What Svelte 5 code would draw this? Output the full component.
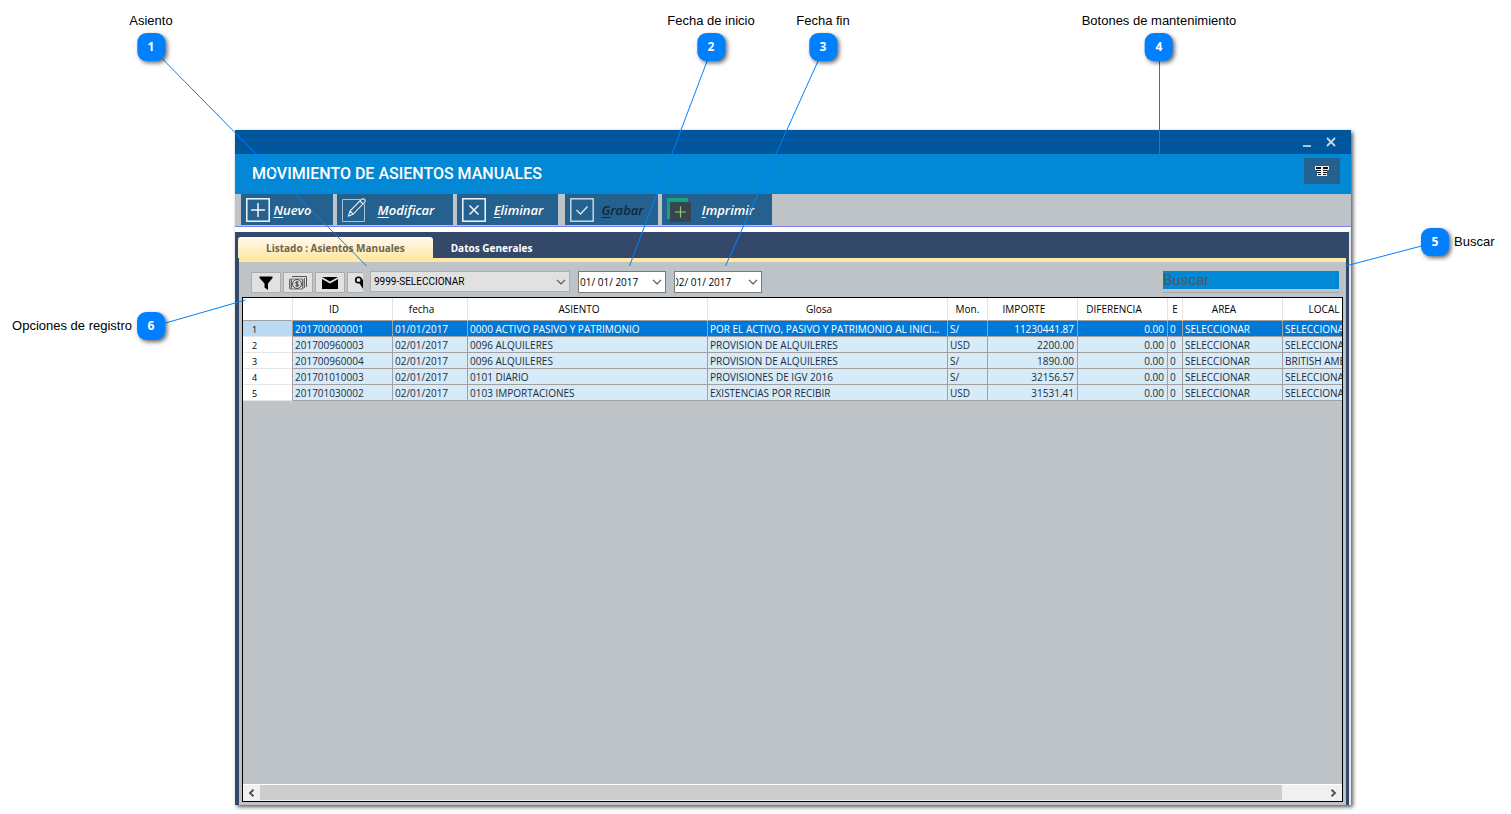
<script lang="ts">
	interface Callout {
		n: number;
		label: string;
		x: number;
		y: number;
		side: 'top' | 'left' | 'right';
		line: [number, number, number, number];
	}

	// x / y is the centre of the numbered badge
	const callouts: Callout[] = [
		{ n: 1, label: 'Asiento', x: 151, y: 47, side: 'top', line: [162, 59, 366, 266] },
		{ n: 2, label: 'Fecha de inicio', x: 711, y: 47, side: 'top', line: [707, 60, 629, 266] },
		{ n: 3, label: 'Fecha fin', x: 823, y: 47, side: 'top', line: [818, 60, 725, 266] },
		{ n: 4, label: 'Botones de mantenimiento', x: 1159, y: 47, side: 'top', line: [1159, 60, 1159, 189] },
		{ n: 5, label: 'Buscar', x: 1435, y: 242, side: 'right', line: [1421, 246, 1345, 266] },
		{ n: 6, label: 'Opciones de registro', x: 151, y: 326, side: 'left', line: [165, 323, 245, 300] }
	];

	const actions = [
		{ id: 'nuevo', label: 'Nuevo' },
		{ id: 'modificar', label: 'Modificar' },
		{ id: 'eliminar', label: 'Eliminar' },
		{ id: 'grabar', label: 'Grabar', disabled: true },
		{ id: 'imprimir', label: 'Imprimir' }
	];

	const columns = [
		{ title: 'ID', width: 100 },
		{ title: 'fecha', width: 75 },
		{ title: 'ASIENTO', width: 240 },
		{ title: 'Glosa', width: 240 },
		{ title: 'Mon.', width: 40, narrow: true },
		{ title: 'IMPORTE', width: 90, num: true },
		{ title: 'DIFERENCIA', width: 90, num: true },
		{ title: 'E', width: 15, narrow: true },
		{ title: 'AREA', width: 100 },
		{ title: 'LOCAL', width: 100 }
	];

	const rows = [
		['201700000001', '01/01/2017', '0000 ACTIVO PASIVO Y PATRIMONIO', 'POR EL ACTIVO, PASIVO Y PATRIMONIO AL INICIO DEL EJERCICIO', 'S/', '11230441.87', '0.00', '0', 'SELECCIONAR', 'SELECCIONAR'],
		['201700960003', '02/01/2017', '0096 ALQUILERES', 'PROVISION DE ALQUILERES', 'USD', '2200.00', '0.00', '0', 'SELECCIONAR', 'SELECCIONAR'],
		['201700960004', '02/01/2017', '0096 ALQUILERES', 'PROVISION DE ALQUILERES', 'S/', '1890.00', '0.00', '0', 'SELECCIONAR', 'BRITISH AMERICAN'],
		['201701010003', '02/01/2017', '0101 DIARIO', 'PROVISIONES DE IGV 2016', 'S/', '32156.57', '0.00', '0', 'SELECCIONAR', 'SELECCIONAR'],
		['201701030002', '02/01/2017', '0103 IMPORTACIONES', 'EXISTENCIAS POR RECIBIR', 'USD', '31531.41', '0.00', '0', 'SELECCIONAR', 'SELECCIONAR']
	];

	let tab = $state('listado');
	let selected = $state(0);
	let desde = $state('01/ 01/ 2017');
	let hasta = $state('02/ 01/ 2017');
	let search = $state('');
</script>

{#snippet chevron()}
	<svg class="chevron" width="10" height="6" viewBox="0 0 10 6" aria-hidden="true">
		<path d="M1 .8 5 4.8 9 .8" fill="none" stroke="#555" stroke-width="1.2" />
	</svg>
{/snippet}

<main>
	<div class="window">
		<div class="titlebar">
			<button aria-label="Minimizar">
				<svg width="12" height="12" viewBox="0 0 12 12"><path d="M2 10h8" stroke="#a9c6e0" stroke-width="2" /></svg>
			</button>
			<button aria-label="Cerrar">
				<svg width="12" height="12" viewBox="0 0 12 12"><path d="m2 2 8 8M10 2l-8 8" stroke="#c3d7ea" stroke-width="1.8" /></svg>
			</button>
		</div>

		<header>
			<h1>MOVIMIENTO DE ASIENTOS MANUALES</h1>
			<button class="menu" aria-label="Menú">
				<svg width="14" height="10" viewBox="0 0 14 10" shape-rendering="crispEdges">
					<path d="M0 0h14v4H0zM2 4h10v6H2z" fill="#f0f0f0" />
					<path d="M1 1h12v2H1zM2 4h10v1H2zM2 6h10v1H2zM3 8h8v1H3z" fill="#111" />
					<path d="M6 0h2v10H6z" fill="#f0f0f0" />
				</svg>
			</button>
		</header>

		<div class="toolbar">
			{#each actions as { id, label, disabled }}
				<button class={id} {disabled}>
					<svg width="24" height="24" viewBox="0 0 24 24" fill="none" aria-hidden="true">
						{#if id === 'nuevo'}
							<rect x=".8" y=".8" width="22.4" height="22.4" stroke="#f2f6f9" stroke-width="1.5" />
							<path d="M12 5v14M5 12h14" stroke="#f2f6f9" stroke-width="1.5" />
						{:else if id === 'modificar'}
							<path d="M18 1.5H.5v22h22V6" stroke="#a9c3d5" />
							<path d="m6.500 18 1.500-5L19.500 1.300q2-1 3.200.4 1 1.300-.2 2.800L11 16.300zM8 13l3 3M18 3l3 3" stroke="#e0eaf1" stroke-width="1.1" />
						{:else if id === 'eliminar'}
							<rect x=".8" y=".8" width="22.4" height="22.4" stroke="#f2f6f9" stroke-width="1.5" />
							<path d="m7.500 7.500 9 9M16.500 7.500l-9 9" stroke="#f2f6f9" stroke-width="1.5" />
						{:else if id === 'grabar'}
							<rect x=".8" y=".8" width="22.4" height="22.4" stroke="#c8d6e0" stroke-width="1.5" />
							<path d="m6.500 12 4 4 7-7.500" stroke="#d8e2ea" stroke-width="1.5" />
						{:else}
							<path d="M0 0h21v4H4v17H0z" fill="#16a085" />
							<path d="M3 4h21v20H3z" fill="#38454f" />
							<path d="M13.500 8.500v11M8 14h11" stroke="#8fce6a" stroke-width="1.2" />
						{/if}
					</svg>
					<span><u>{label[0]}</u>{label.slice(1)}</span>
				</button>
			{/each}
		</div>

		<div class="body">
			<div class="tabs" role="tablist">
				<button role="tab" class:active={tab === 'listado'} aria-selected={tab === 'listado'} onclick={() => (tab = 'listado')}>Listado : Asientos Manuales</button>
				<button role="tab" class:active={tab === 'datos'} aria-selected={tab === 'datos'} onclick={() => (tab = 'datos')}>Datos Generales</button>
			</div>

			<div class="panel">
				<div class="filters">
					<div class="tools">
						<button aria-label="Filtrar">
							<svg width="14" height="14" viewBox="0 0 14 14"><path d="M.5.500h13v1.500L9 7.500V14L5.500 11.500V7.500L.500 2z" fill="#000" /></svg>
						</button>
						<button aria-label="Importes">
							<svg width="18" height="14" viewBox="0 0 18 14" fill="none">
								<path d="M3 .5h14.500V11" stroke="#555" />
								<path d="M.5 3v10M2.500 3v10M13.500 3v10M15.500 2v10" stroke="#666" />
								<path d="M1 3h13v10H1z" stroke="#777" />
								<circle cx="8" cy="8" r="4.500" fill="#ddd" stroke="#444" />
								<path d="M9.500 6.200q-3-.8-3 .7c0 1.500 3.200.8 3.200 2.200s-2 1.200-3.400.5M8 5v6" stroke="#333" stroke-width=".9" />
							</svg>
						</button>
						<button aria-label="Enviar">
							<svg width="16" height="12" viewBox="0 0 16 12"><path d="M0 0h16L8 4.500zM0 2l8 4.500L16 2v10H0z" fill="#000" /></svg>
						</button>
						<button aria-label="Clave" class="cut">
							<svg width="14" height="14" viewBox="0 0 14 14" fill="none" stroke="#000">
								<circle cx="4.500" cy="4" r="2.800" stroke-width="1.600" />
								<path d="M8 3.500v6.500M6 6.500l4 6" stroke-width="2" />
							</svg>
						</button>
					</div>

					<div class="combo">
						<select aria-label="Asiento">
							<option>9999-SELECCIONAR</option>
						</select>
						{@render chevron()}
					</div>

					<div class="date">
						<input type="text" aria-label="Fecha de inicio" bind:value={desde} />
						<button aria-label="Abrir calendario de inicio">{@render chevron()}</button>
					</div>
					<div class="date shifted">
						<input type="text" aria-label="Fecha fin" bind:value={hasta} />
						<button aria-label="Abrir calendario de fin">{@render chevron()}</button>
					</div>

					<div class="search">
						<input type="text" placeholder="Buscar" aria-label="Buscar" bind:value={search} />
					</div>
				</div>

				<div class="grid">
					<div class="viewport">
						<table>
							<colgroup>
								<col class="index" />
								{#each columns as col}
									<col style="width: {col.width}px" />
								{/each}
							</colgroup>
							<thead>
								<tr>
									<th aria-label="Fila"></th>
									{#each columns as col}
										<th scope="col" class:narrow={col.narrow}>{col.title}</th>
									{/each}
								</tr>
							</thead>
							<tbody>
								{#each rows as row, i}
									<tr class:selected={i === selected} onclick={() => (selected = i)}>
										<th scope="row">{i + 1}</th>
										{#each row as cell, c}
											<td class:num={columns[c].num}>{cell}</td>
										{/each}
									</tr>
								{/each}
							</tbody>
						</table>
					</div>
					<div class="scrollbar">
						<button aria-label="Desplazar a la izquierda">
							<svg width="7" height="8" viewBox="0 0 7 8"><path d="M5.500.7 2 4l3.500 3.300" fill="none" stroke="#505050" stroke-width="1.9" /></svg>
						</button>
						<div class="track"><div class="thumb"></div></div>
						<button aria-label="Desplazar a la derecha">
							<svg width="7" height="8" viewBox="0 0 7 8"><path d="M1.500.7 5 4 1.500 7.300" fill="none" stroke="#505050" stroke-width="1.9" /></svg>
						</button>
					</div>
				</div>
			</div>
		</div>
	</div>

	<svg class="lines" aria-hidden="true">
		{#each callouts as { line }}
			<line x1={line[0] + 0.5} y1={line[1]} x2={line[2] + 0.5} y2={line[3]} />
		{/each}
	</svg>
	{#each callouts as { n, label, x, y, side }}
		<div class="callout {side}" style="left: {x}px; top: {y}px">
			<span class="label">{label}</span>
			<span class="badge">{n}</span>
		</div>
	{/each}
</main>

<style>
	:global(body) {
		margin: 0;
		background: #fff;
	}

	main {
		--ui: 'Open Sans', 'Noto Sans', sans-serif;
		--gray: #bdc3c7;
		--navy: #34496a;
		--steel: #24618e;
		--sky: #0288d4;

		position: relative;
		display: flex;
		box-sizing: border-box;
		min-height: 100vh;
		padding: 130px 160px 9px 235px;
		font-family: var(--ui);
	}

	button,
	input,
	select {
		margin: 0;
		padding: 0;
		border: 0;
		border-radius: 0;
		background: none;
		font: inherit;
		color: inherit;
		outline-offset: -1px;
	}

	.window {
		flex: 1;
		min-width: 0;
		display: flex;
		flex-direction: column;
		box-shadow: 2px 2px 4px rgb(0 0 0 / 65%);
	}

	.titlebar {
		display: flex;
		justify-content: flex-end;
		align-items: center;
		gap: 12px;
		height: 24px;
		padding-right: 14px;
		background: #00569c;

		& button {
			display: flex;
		}
	}

	header {
		display: flex;
		justify-content: space-between;
		align-items: center;
		height: 40px;
		padding: 0 11px 0 17px;
		background: var(--sky);

		& h1 {
			margin: 0;
			font: 500 16px/24px Roboto, sans-serif;
			color: #fff;
		}
		& .menu {
			display: grid;
			place-items: center;
			width: 36px;
			height: 26px;
			margin-bottom: 6px;
			background: var(--steel);
		}
	}

	.toolbar {
		display: flex;
		gap: 4px;
		height: 32px;
		padding-left: 6px;
		border-bottom: 1px solid #8080f0;
		background: var(--gray);

		& button {
			display: flex;
			align-items: center;
			height: 31px;
			padding: 0 5px;
			background: var(--steel);
			color: #fff;
			font-size: 13px;
			font-style: italic;
			font-weight: 600;
		}
		& button:disabled {
			color: #12263a;
		}
		& span {
			flex: 1;
			padding-right: 2px;
			text-align: center;
		}
		& u {
			text-underline-offset: 2px;
		}
		& .nuevo {
			width: 92px;
			padding-right: 16px;
		}
		& .modificar {
			width: 116px;
		}
		& .eliminar {
			width: 101px;
		}
		& .grabar {
			width: 93px;
			margin-left: 3px;
		}
		& .imprimir {
			width: 110px;
		}
	}

	.body {
		flex: 1;
		display: flex;
		flex-direction: column;
		border-top: 5px solid #fff;
		border-right: 2px solid #e6e6e6;
		background: var(--navy);
	}

	.tabs {
		display: flex;
		height: 21px;
		padding: 5px 0 0 3px;

		& button {
			padding: 0 18px;
			border-radius: 3px 3px 0 0;
			color: #fff;
			font-size: 10px;
			line-height: 20px;
			font-weight: 700;
		}
		& button.active {
			padding: 0 28px;
			background: linear-gradient(#fffaf0, #ffe8a6);
			color: #6d6452;
		}
	}

	.panel {
		flex: 1;
		display: flex;
		flex-direction: column;
		margin: 0 3px 0 4px;
		padding: 0 3px 3px;
		border-top: 4px solid #ffe8a6;
		background: var(--gray);
	}

	.filters {
		display: flex;
		align-items: flex-start;
		gap: 8px;
		padding: 9px 4px 4px 9px;
	}

	.tools {
		display: flex;
		gap: 2px;
		width: 112px;
		margin-top: 1px;
		overflow: hidden;

		& button {
			flex: none;
			display: grid;
			place-items: center;
			box-sizing: border-box;
			width: 30px;
			height: 21px;
			border: 1px solid #adadad;
			background: #e1e1e1;
		}
		& .cut {
			justify-items: start;
			padding-left: 6px;
		}
	}

	.combo {
		display: grid;
		align-items: center;
		width: 200px;
		margin-left: -1px;

		& > :global(*) {
			grid-area: 1 / 1;
		}
		& select {
			appearance: none;
			box-sizing: border-box;
			height: 21px;
			padding-left: 3px;
			border: 1px solid #adadad;
			background: #e1e1e1;
			color: #000;
			font: 10px Roboto, sans-serif;
		}
		& .chevron {
			justify-self: end;
			margin-right: 4px;
			pointer-events: none;
		}
	}

	.date {
		display: flex;
		box-sizing: border-box;
		width: 88px;
		height: 22px;
		border: 1px solid #7a7a7a;
		background: #fff;

		& input {
			flex: 1;
			min-width: 0;
			padding-left: 1px;
			color: #000;
			font-size: 10px;
		}
		& button {
			display: grid;
			place-items: center;
			width: 16px;
		}
	}

	.shifted input {
		text-indent: -3px;
	}

	.search {
		width: 176px;
		margin-left: auto;
		padding-bottom: 3px;
		border-bottom: 1px solid #a5a9ac;

		& input {
			display: block;
			width: 100%;
			height: 18px;
			background: var(--sky);
			font: 15px Roboto, sans-serif;
		}
		& input::placeholder {
			color: #4d5860;
			opacity: 1;
		}
	}

	.grid {
		flex: 1;
		display: flex;
		flex-direction: column;
		border: 1px solid #000;
	}

	.viewport {
		flex: 1;
		width: 0;
		min-width: 100%;
		overflow: hidden;
	}

	table {
		width: 1140px;
		table-layout: fixed;
		border-collapse: separate;
		border-spacing: 0;
		font-size: 10px;
		color: #1d2b3a;
	}

	.index {
		width: 50px;
	}

	th,
	td {
		box-sizing: border-box;
		height: 16px;
		padding: 2px 2px 0;
		border-right: 1px solid #a0a0a0;
		border-bottom: 1px solid #a0a0a0;
		line-height: 13px;
		white-space: nowrap;
		overflow: hidden;
		text-overflow: ellipsis;
	}

	td {
		background: #d6eaf8;
	}

	td:last-child {
		text-overflow: clip;
	}

	.num {
		padding-right: 3px;
		text-align: right;
	}

	th {
		background: #fff;
		color: #000;
		font-weight: 400;
	}

	thead th {
		height: 23px;
		padding: 0 19px 0 2px;
		border-right-color: #e5e5e5;
		text-overflow: clip;
	}

	thead th.narrow {
		padding-right: 2px;
	}

	tbody th {
		padding-left: 9px;
		border-bottom-color: #e5e5e5;
		font-size: 9px;
		text-align: left;
	}

	.selected {
		& td {
			background: #0078d7;
			color: #fff;
		}
		& th {
			background: #b9daf2;
		}
	}

	.scrollbar {
		display: flex;
		height: 16px;
		border-top: 1px solid #fff;
		background: #f0f0f0;

		& button {
			display: grid;
			place-items: center;
			width: 17px;
		}
	}

	.track {
		flex: 1;
	}

	.thumb {
		width: 96%;
		height: 15px;
		background: #cdcdcd;
	}

	.lines {
		position: absolute;
		inset: 0;
		width: 100%;
		height: 100%;
		pointer-events: none;
		stroke: #0080ff;
		stroke-width: 1;
	}

	.callout {
		position: absolute;
		display: flex;
		align-items: center;
		gap: 5px;
		color: #000;
		font: 13px/16px 'Liberation Sans', Arial, sans-serif;
		white-space: nowrap;
	}

	/* keep the badge centre on the anchor, whichever side the label is on */
	.top {
		flex-direction: column;
		gap: 4px;
		transform: translate(-50%, -34px);
	}

	.left {
		transform: translate(calc(-100% + 14px), -50%);
	}

	.right {
		flex-direction: row-reverse;
		transform: translate(-14px, -50%);
	}

	.badge {
		width: 28px;
		height: 28px;
		border-radius: 9px;
		background: #0080ff;
		box-shadow: 2px 2px 4px rgb(0 0 0 / 60%);
		color: #fff;
		font: 700 12px/28px 'Open Sans', sans-serif;
		text-align: center;
	}
</style>
